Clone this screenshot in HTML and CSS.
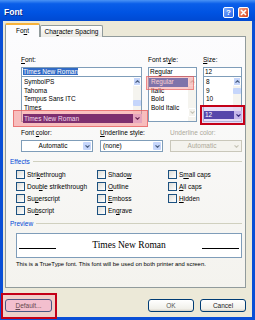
FILE: index.html
```html
<!DOCTYPE html>
<html lang="en">
<head>
    <meta charset="UTF-8">
    <meta name="viewport" content="width=device-width, initial-scale=1.0">
    <title>Font</title>
    <link rel="stylesheet" href="styles.css">
</head>
<body>
    <div class="window">
        <div class="titlebar">
            <span class="title">Font</span>
            <span class="tbtn help">?</span>
            <span class="tbtn close">
                <svg width="7" height="7" viewBox="0 0 7 7"><path d="M1 1L6 6M6 1L1 6" stroke="#fff" stroke-width="1.6"/></svg>
            </span>
        </div>

        <div class="client">
            <div class="tabs">
                <div class="tab active">Fo<u>n</u>t</div>
                <div class="tab">Cha<u>r</u>acter Spacing</div>
            </div>

            <div class="panel">
                <div class="pickers">
                    <div class="col font-col">
                        <div class="lbl"><u>F</u>ont:</div>
                        <div class="field"><span class="sel">Times New Roman</span></div>
                        <div class="list">
                            <div class="rows">
                                <div>SymbolPS</div>
                                <div>Tahoma</div>
                                <div>Tempus Sans ITC</div>
                                <div>Times</div>
                                <div class="covered">Times New Roman</div>
                            </div>
                            <div class="vscroll">
                                <div class="sbtn"><svg width="5" height="3" viewBox="0 0 5 3"><path d="M0.5 2.6L2.5 0.7L4.5 2.6" fill="none" stroke="#4d6185" stroke-width="1.2"/></svg></div>
                                <div class="thumb font-thumb"></div>
                            </div>
                            <div class="mark mark-font">
                                <div class="hl">Times New Roman</div>
                                <div class="hl-arrow"><svg width="5" height="3" viewBox="0 0 5 3"><path d="M0.5 0.4L2.5 2.3L4.5 0.4" fill="none" stroke="#6a2a55" stroke-width="1.2"/></svg></div>
                            </div>
                        </div>
                    </div>

                    <div class="col style-col">
                        <div class="lbl">Font st<u>y</u>le:</div>
                        <div class="field">Regular</div>
                        <div class="list">
                            <div class="rows">
                                <div class="on">Regular</div>
                                <div>Italic</div>
                                <div>Bold</div>
                                <div>Bold Italic</div>
                            </div>
                            <div class="vscroll off">
                                <div class="sbtn"><svg width="5" height="3" viewBox="0 0 5 3"><path d="M0.5 2.6L2.5 0.7L4.5 2.6" fill="none" stroke="#c9c7ba" stroke-width="1.2"/></svg></div>
                                <div class="fill"></div>
                                <div class="sbtn"><svg width="5" height="3" viewBox="0 0 5 3"><path d="M0.5 0.4L2.5 2.3L4.5 0.4" fill="none" stroke="#c9c7ba" stroke-width="1.2"/></svg></div>
                            </div>
                            <div class="mark mark-style"></div>
                        </div>
                    </div>

                    <div class="col size-col">
                        <div class="lbl"><u>S</u>ize:</div>
                        <div class="field">12</div>
                        <div class="list">
                            <div class="rows">
                                <div>8</div>
                                <div>9</div>
                                <div>10</div>
                                <div class="covered">11</div>
                            </div>
                            <div class="vscroll">
                                <div class="sbtn"><svg width="5" height="3" viewBox="0 0 5 3"><path d="M0.5 2.6L2.5 0.7L4.5 2.6" fill="none" stroke="#4d6185" stroke-width="1.2"/></svg></div>
                                <div class="thumb size-thumb"></div>
                            </div>
                            <div class="mark mark-size">
                                <div class="hl">12</div>
                                <div class="hl-arrow"><svg width="5" height="3" viewBox="0 0 5 3"><path d="M0.5 0.4L2.5 2.3L4.5 0.4" fill="none" stroke="#3d3080" stroke-width="1.2"/></svg></div>
                            </div>
                        </div>
                    </div>
                </div>

                <div class="combos">
                    <div class="col color-col">
                        <div class="lbl">Font <u>c</u>olor:</div>
                        <div class="combo">
                            <span class="val center">Automatic</span>
                            <span class="arrow"><svg width="5" height="3" viewBox="0 0 5 3"><path d="M0.5 0.4L2.5 2.3L4.5 0.4" fill="none" stroke="#4d6185" stroke-width="1.2"/></svg></span>
                        </div>
                    </div>
                    <div class="col uline-col">
                        <div class="lbl"><u>U</u>nderline style:</div>
                        <div class="combo">
                            <span class="val">(none)</span>
                            <span class="arrow"><svg width="5" height="3" viewBox="0 0 5 3"><path d="M0.5 0.4L2.5 2.3L4.5 0.4" fill="none" stroke="#4d6185" stroke-width="1.2"/></svg></span>
                        </div>
                    </div>
                    <div class="col ucolor-col disabled">
                        <div class="lbl">Underline color:</div>
                        <div class="combo">
                            <span class="val center">Automatic</span>
                            <span class="arrow"><svg width="5" height="3" viewBox="0 0 5 3"><path d="M0.5 0.4L2.5 2.3L4.5 0.4" fill="none" stroke="#c9c7ba" stroke-width="1.2"/></svg></span>
                        </div>
                    </div>
                </div>

                <div class="group-title effects-title"><span>Effects</span></div>
                <div class="checks">
                    <div class="check"><span class="box"></span><span>Stri<u>k</u>ethrough</span></div>
                    <div class="check"><span class="box"></span><span>Shado<u>w</u></span></div>
                    <div class="check"><span class="box"></span><span>S<u>m</u>all caps</span></div>
                    <div class="check"><span class="box"></span><span>Dou<u>b</u>le strikethrough</span></div>
                    <div class="check"><span class="box"></span><span><u>O</u>utline</span></div>
                    <div class="check"><span class="box"></span><span><u>A</u>ll caps</span></div>
                    <div class="check"><span class="box"></span><span>Su<u>p</u>erscript</span></div>
                    <div class="check"><span class="box"></span><span><u>E</u>mboss</span></div>
                    <div class="check"><span class="box"></span><span><u>H</u>idden</span></div>
                    <div class="check"><span class="box"></span><span>Su<u>b</u>script</span></div>
                    <div class="check"><span class="box"></span><span>En<u>g</u>rave</span></div>
                </div>

                <div class="group-title preview-title"><span>Preview</span></div>
                <div class="preview">
                    <div class="pv-line"></div>
                    <div class="pv-text">Times New Roman</div>
                    <div class="pv-line"></div>
                </div>
                <div class="note">This is a TrueType font. This font will be used on both printer and screen.</div>
            </div>

            <div class="buttons">
                <div class="btn default-btn"><u>D</u>efault...</div>
                <div class="mark mark-default"></div>
                <div class="spacer"></div>
                <div class="btn ok-btn">OK</div>
                <div class="btn">Cancel</div>
            </div>
        </div>
    </div>
</body>
</html>
```

FILE: styles.css
```css
body {
    margin: 0;
    font-family: "Liberation Sans", Arial, sans-serif;
    font-size: 6.5px;
    color: #000;
}
.window {
    width: 255px;
    height: 320px;
    background: #0a4fd6;
    display: flex;
    flex-direction: column;
}
.titlebar {
    height: 21px;
    flex: none;
    display: flex;
    align-items: center;
    gap: 4px;
    padding: 3px 6px 0 4px;
    box-sizing: border-box;
    background: linear-gradient(#4a93f5, #0a5ee9 18%, #0053e2 60%, #0049d2);
}
.title {
    flex: 1;
    color: #fff;
    font-weight: bold;
    font-size: 8.5px;
    text-shadow: 1px 1px 0 #0c2f8a;
}
.tbtn {
    width: 11px;
    height: 11px;
    border: 1px solid #fff;
    border-radius: 2px;
    box-sizing: border-box;
    display: flex;
    align-items: center;
    justify-content: center;
    color: #fff;
    font-weight: bold;
    font-size: 8px;
}
.help {
    background: linear-gradient(135deg, #7aaaff, #2b66e8);
}
.close {
    background: linear-gradient(135deg, #f3a58a, #d8431b);
}
.client {
    flex: 1;
    margin: 0 3px 3px;
    background: #ece9d8;
    padding: 2px 6px 0 2px;
    display: flex;
    flex-direction: column;
}
.tabs {
    display: flex;
    align-items: flex-end;
    height: 14px;
    margin-bottom: -1px;
    position: relative;
    z-index: 1;
}
.tab {
    height: 12px;
    width: 63px;
    box-sizing: border-box;
    border: 1px solid #919b9c;
    border-bottom: none;
    border-radius: 2px 2px 0 0;
    background: linear-gradient(#fff, #ecebe5);
    line-height: 11px;
    text-align: center;
}
.tab.active {
    width: 35px;
    height: 14px;
    line-height: 12px;
    background: #fcfcfe;
    border-top: 2px solid #f7b23b;
}
.panel {
    height: 252px;
    box-sizing: border-box;
    border: 1px solid #919b9c;
    background: linear-gradient(#fcfcfe, #f4f3ee);
    padding: 19px 3px 0 4px;
}
.pickers, .combos {
    display: flex;
    margin-left: 11px;
}
.pickers {
    gap: 6px;
}
.font-col { width: 121px; }
.style-col { width: 49px; }
.size-col { width: 39px; }
.lbl {
    height: 8px;
    line-height: 8px;
    margin-bottom: 3px;
    white-space: nowrap;
}
.field {
    height: 10px;
    box-sizing: border-box;
    border: 1px solid #7f9db9;
    background: #fff;
    line-height: 8px;
    padding-left: 1px;
}
.sel {
    background: #316ac5;
    color: #fff;
}
.list {
    position: relative;
    height: 45px;
    box-sizing: border-box;
    border: 1px solid #7f9db9;
    border-top: none;
    background: #fff;
    display: flex;
}
.rows {
    flex: 1;
    padding-top: 1px;
    overflow: hidden;
}
.rows div {
    height: 8.7px;
    line-height: 8.7px;
    padding-left: 2px;
    white-space: nowrap;
}
.rows .on {
    background: #316ac5;
    color: #fff;
}
.rows .covered {
    visibility: hidden;
}
.vscroll {
    width: 8px;
    display: flex;
    flex-direction: column;
    background: #f5f4ef;
}
.sbtn {
    height: 9px;
    background: #c6d6fb;
    border: 1px solid #fff;
    border-radius: 1px;
    box-sizing: border-box;
    display: flex;
    align-items: center;
    justify-content: center;
}
.vscroll.off .sbtn {
    background: #f4f3ee;
}
.vscroll.off .fill {
    flex: 1;
}
.vscroll.off .sbtn:last-child {
    margin-bottom: 4px;
}
.thumb {
    height: 6px;
    background: #c6d6fb;
    border-radius: 1px;
}
.font-thumb { margin-top: 14px; }
.size-thumb { margin-top: 2px; }

/* highlight marks drawn over the screenshot */
.mark {
    position: absolute;
    box-sizing: border-box;
    display: flex;
}
.mark-font {
    left: -9px;
    top: 33px;
    width: 135px;
    height: 17px;
    padding: 3px 5px 3px 9px;
    border: 1px solid rgba(225, 70, 70, 0.6);
    background: rgba(245, 140, 140, 0.55);
}
.mark-font .hl {
    flex: 1;
    background: #7e2f6f;
    color: #f3dced;
    line-height: 9px;
    padding-left: 1px;
}
.mark-font .hl-arrow {
    width: 9px;
    background: #e5a5bd;
}
.hl-arrow {
    display: flex;
    align-items: center;
    justify-content: center;
}
.mark-style {
    left: -3px;
    top: -1px;
    width: 48px;
    height: 14px;
    border: 1px solid rgba(225, 70, 70, 0.5);
    background: rgba(245, 130, 130, 0.4);
}
.mark-size {
    left: -4px;
    top: 28px;
    width: 45px;
    height: 20px;
    padding: 4px 1px 4px 2px;
    border: 2px solid #c40018;
    background: rgba(215, 195, 240, 0.55);
}
.mark-size .hl {
    flex: 1;
    background: #5747ab;
    color: #fff;
    line-height: 8px;
    padding-left: 1px;
}
.mark-size .hl-arrow {
    width: 8px;
    background: #c8b9ea;
}
.combos {
    gap: 7px;
    margin-top: 7px;
}
.color-col { width: 72px; }
.uline-col { width: 63px; }
.ucolor-col { width: 72px; }
.combo {
    height: 12px;
    box-sizing: border-box;
    border: 1px solid #7f9db9;
    background: #fff;
    display: flex;
}
.combo .val {
    flex: 1;
    line-height: 10px;
    padding-left: 2px;
}
.combo .center {
    text-align: center;
}
.combo .arrow {
    width: 8px;
    margin: 1px;
    background: #c6d6fb;
    border-radius: 1px;
    display: flex;
    align-items: center;
    justify-content: center;
}
.disabled {
    color: #aca899;
}
.disabled .combo {
    border-color: #c9c7ba;
    background: #f4f3ee;
}
.disabled .combo .arrow {
    background: #f4f3ee;
}
.group-title {
    display: flex;
    align-items: center;
    height: 8px;
    color: #0046d5;
}
.group-title::after {
    content: "";
    flex: 1;
    border-top: 1px solid #d0d0bf;
    margin: 0 0 0 3px;
}
.effects-title {
    margin-top: 5px;
}
.checks {
    display: grid;
    grid-template-columns: 81px 71px auto;
    row-gap: 3px;
    margin: 5px 0 0 6px;
}
.check {
    display: flex;
    align-items: center;
    gap: 2px;
    height: 9px;
    white-space: nowrap;
}
.box {
    width: 9px;
    height: 9px;
    box-sizing: border-box;
    border: 1px solid #1c5180;
    background: linear-gradient(135deg, #dcdcd7, #fff);
}
.preview-title {
    margin-top: 4px;
}
.preview {
    height: 25px;
    box-sizing: border-box;
    margin: 6px 0 0 6px;
    border: 1px solid #7f9db9;
    background: #fff;
    display: flex;
    align-items: center;
    justify-content: space-between;
    padding: 0 2px;
}
.pv-line {
    width: 37px;
    height: 0;
    border-top: 1px solid #000;
    margin-top: 5px;
}
.pv-text {
    font-family: "Liberation Serif", "Times New Roman", serif;
    font-size: 9.5px;
    line-height: 11px;
}
.note {
    margin: 2px 0 0 6px;
    font-size: 5.9px;
    line-height: 8px;
    white-space: nowrap;
}
.buttons {
    position: relative;
    display: flex;
    gap: 6px;
    margin-top: 11px;
}
.btn {
    width: 46px;
    height: 13px;
    box-sizing: border-box;
    border: 1px solid #003c74;
    border-radius: 3px;
    background: linear-gradient(#fff, #f1f0ea 80%, #d8d2c6);
    text-align: center;
    line-height: 11px;
    color: #222;
}
.ok-btn {
    color: #555;
}
.default-btn {
    width: 47px;
    background: #f3d2df;
}
.spacer {
    flex: 1;
}
.mark-default {
    left: -4px;
    top: -6px;
    width: 56px;
    height: 26px;
    border: 2px solid #c40018;
    background: rgba(245, 150, 170, 0.3);
}
```
